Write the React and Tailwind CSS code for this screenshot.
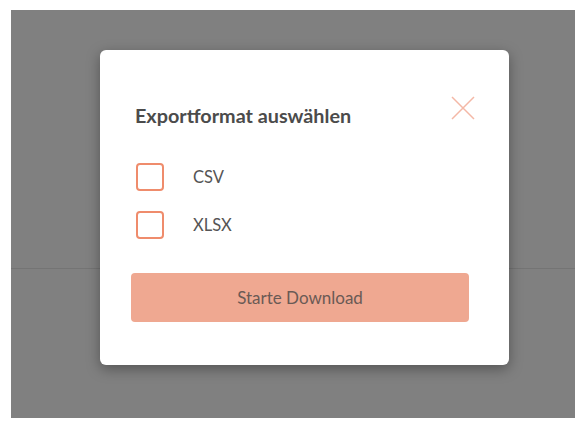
const formats = ["CSV", "XLSX"];

export default function App() {
  return (
    <div className="h-[421px] w-[575px] bg-white pl-[11px] pt-[10px] font-['Lato','Noto_Sans',sans-serif]">
      {/* dimmed page behind the dialog */}
      <div className="relative h-[408px] w-full bg-[#808080]">
        <div className="absolute left-0 right-0 top-[258px] h-px bg-[#747474]" />

        <div className="absolute left-[89px] top-[40px] h-[315px] w-[409px] rounded-md bg-white px-[35px] pt-[43px] shadow-[0_4px_14px_rgba(0,0,0,0.35)]">
          <div className="flex items-start justify-between">
            <h2 className="mt-[8px] text-[19.8px] font-bold leading-[28px] text-[#4b4b4b]">
              Exportformat auswählen
            </h2>
            <button className="mr-[-1px] mt-[3px] text-[#f4b8a6]">
              <svg width="24" height="24" viewBox="0 0 24 24" fill="none" stroke="currentColor" strokeWidth="1.5">
                <path d="M1 1 L23 23 M23 1 L1 23" />
              </svg>
            </button>
          </div>

          <div className="mt-[34px] flex flex-col gap-[20px] pl-px">
            {formats.map((format) => (
              <label key={format} className="flex items-center gap-[29px]">
                <span className="h-[28px] w-[28px] rounded-[4px] border-2 border-[#ef8c6c]" />
                <span className="text-[16.5px] text-[#555]">{format}</span>
              </label>
            ))}
          </div>

          <button className="ml-[-4px] mt-[34px] h-[49px] w-[338px] rounded-[4px] bg-[#efa891] text-[17px] text-[#6a5a55]">
            Starte Download
          </button>
        </div>
      </div>
    </div>
  );
}
